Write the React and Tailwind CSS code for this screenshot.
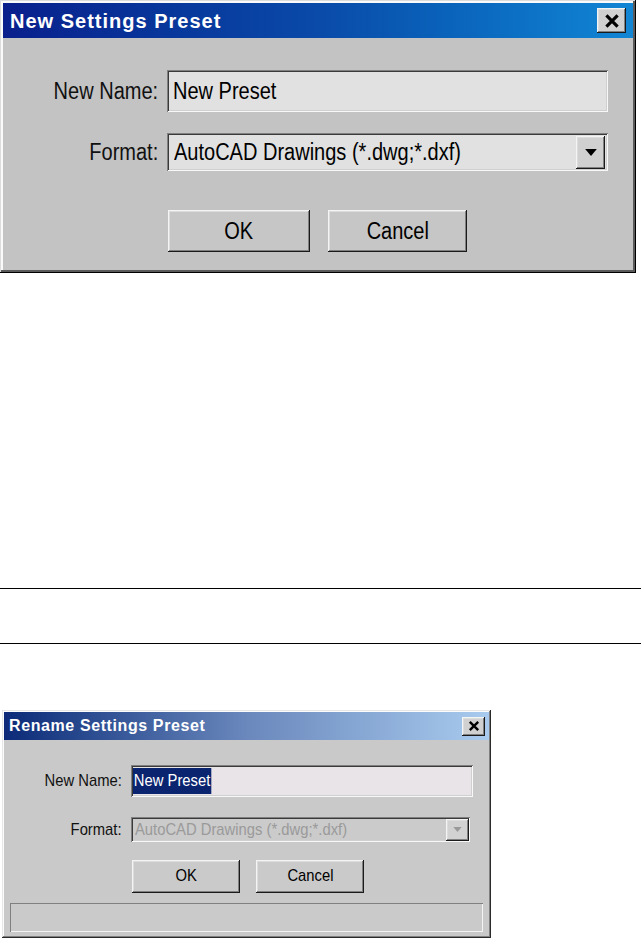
const raised =
  "shadow-[inset_-1px_-1px_#1a1a1a,inset_1px_1px_#f4f4f4,inset_-2px_-2px_#808080,inset_2px_2px_#dcdcdc]";
const sunken =
  "shadow-[inset_1px_1px_#808080,inset_-1px_-1px_#f8f8f8,inset_2px_2px_#3a3a3a,inset_-2px_-2px_#d0d0d0]";

// old bitmap dialog font: tall and narrow, so squeeze a larger size horizontally
const Txt = ({ children, className = "" }) => (
  <span className={`inline-block scale-x-[0.87] ${className}`}>{children}</span>
);

const CloseBox = ({ className, size }) => (
  <div className={`flex items-center justify-center bg-[#d0d0d0] ${raised} ${className}`}>
    <svg width={size} height={size} viewBox="0 0 10 10">
      <path d="M1.5 1.5 L8.5 8.5 M8.5 1.5 L1.5 8.5" stroke="#000" strokeWidth="2" />
    </svg>
  </div>
);

const Arrow = ({ w, h, color }) => (
  <svg width={w} height={h} viewBox="0 0 10 6">
    <path d="M0 0 H10 L5 6 Z" fill={color} />
  </svg>
);

const NewPresetDialog = () => (
  <div
    className="w-[636px] h-[273px] bg-[#c3c3c3] p-[3px] flex flex-col shadow-[inset_-1px_-1px_#000,inset_1px_1px_#dcdcdc,inset_-3px_-3px_#5a5a5a,inset_3px_3px_#fafafa]"
    style={{ fontFamily: '"Liberation Sans", Arial, sans-serif' }}
  >
    <div className="h-[35px] flex items-center justify-between pl-[7px] pr-[7px] bg-gradient-to-r from-[#0a1f8c] via-[#0a4aa8] to-[#1286d4]">
      <span className="text-white font-bold text-[20px] tracking-[1px]">
        New Settings Preset
      </span>
      <CloseBox className="w-[29px] h-[25px]" size={16} />
    </div>

    <div className="flex items-center mt-[32px]">
      <div className="w-[155px] text-right text-[23px] text-[#111]">
        <Txt className="origin-right">New Name:</Txt>
      </div>
      <div className={`ml-[9px] w-[441px] h-[42px] bg-[#e1e1e1] flex items-center pl-[6px] text-[23px] text-black ${sunken}`}>
        <Txt className="origin-left">New Preset</Txt>
      </div>
    </div>

    <div className="flex items-center mt-[21px]">
      <div className="w-[155px] text-right text-[23px] text-[#111]">
        <Txt className="origin-right">Format:</Txt>
      </div>
      <div className={`ml-[9px] w-[441px] h-[38px] bg-[#e1e1e1] flex items-center justify-between pl-[7px] pr-[3px] text-[23px] text-black ${sunken}`}>
        <Txt className="origin-left">AutoCAD Drawings (*.dwg;*.dxf)</Txt>
        <div className={`w-[29px] h-[33px] bg-[#d0d0d0] flex items-center justify-center ${raised}`}>
          <Arrow w={12} h={7} color="#000" />
        </div>
      </div>
    </div>

    <div className="flex mt-[39px] ml-[165px] gap-[18px]">
      <button className={`w-[142px] h-[42px] bg-[#c6c6c6] text-[23px] text-black ${raised}`}>
        <Txt>OK</Txt>
      </button>
      <button className={`w-[139px] h-[42px] bg-[#c6c6c6] text-[23px] text-black ${raised}`}>
        <Txt>Cancel</Txt>
      </button>
    </div>
  </div>
);

const RenamePresetDialog = () => (
  <div
    className="w-[489px] h-[228px] bg-[#c9c9c9] p-[2px] flex flex-col shadow-[inset_-1px_-1px_#2a2a2a,inset_1px_1px_#e6e6e6,inset_-2px_-2px_#808080,inset_2px_2px_#fcfcfc]"
    style={{ fontFamily: '"Liberation Sans", Arial, sans-serif' }}
  >
    <div className="h-[28px] flex items-center justify-between pl-[5px] pr-[4px] bg-gradient-to-r from-[#0c2a78] via-[#6a88bc] to-[#a9cbee]">
      <span className="text-white font-bold text-[16px] tracking-[0.6px]">Rename Settings Preset</span>
      <CloseBox className="w-[23px] h-[19px]" size={12} />
    </div>

    <div className="flex items-center mt-[25px]">
      <div className="w-[118px] text-right text-[17px] text-[#111]">
        <Txt className="origin-right">New Name:</Txt>
      </div>
      <div className={`ml-[9px] w-[342px] h-[32px] bg-[#e8e4e8] flex items-center pl-[2px] ${sunken}`}>
        <Txt className="origin-left bg-[#0a2470] text-white text-[17px] px-[1px] leading-[26px]">New Preset</Txt>
      </div>
    </div>

    <div className="flex items-center mt-[20px]">
      <div className="w-[118px] text-right text-[17px] text-[#111]">
        <Txt className="origin-right">Format:</Txt>
      </div>
      <div className={`ml-[9px] w-[339px] h-[25px] bg-[#cbcbcb] flex items-center justify-between pl-[4px] pr-[1px] text-[17px] text-[#9a9a9a] ${sunken}`}>
        <Txt className="origin-left">AutoCAD Drawings (*.dwg;*.dxf)</Txt>
        <div className={`w-[23px] h-[22px] bg-[#d2d2d2] flex items-center justify-center ${raised}`}>
          <Arrow w={9} h={5} color="#9a9a9a" />
        </div>
      </div>
    </div>

    <div className="flex mt-[17px] ml-[128px] gap-[16px]">
      <button className={`w-[108px] h-[33px] bg-[#cacaca] text-[17px] text-black ${raised}`}>
        <Txt>OK</Txt>
      </button>
      <button className={`w-[108px] h-[33px] bg-[#cacaca] text-[17px] text-black ${raised}`}>
        <Txt>Cancel</Txt>
      </button>
    </div>

    <div className="mt-[10px] mx-[6px] h-[29px] bg-[#cacaca] shadow-[inset_1px_1px_#808080,inset_-1px_-1px_#f4f4f4]" />
  </div>
);

export default function App() {
  return (
    <div className="w-[641px] h-[940px] bg-white flex flex-col">
      <NewPresetDialog />
      <div className="mt-[315px] h-px bg-black" />
      <div className="mt-[54px] h-px bg-black" />
      <div className="mt-[66px] ml-[2px]">
        <RenamePresetDialog />
      </div>
    </div>
  );
}
